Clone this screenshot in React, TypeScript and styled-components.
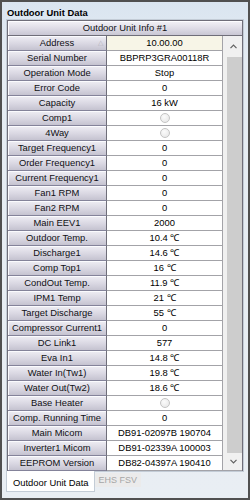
import React from 'react';
import styled, {createGlobalStyle} from 'styled-components';

const GlobalStyle = createGlobalStyle`
    html, body {
        margin: 0;
        padding: 0;
        background: #ffffff;
    }
    body {
        font-family: "Liberation Sans", Arial, sans-serif;
    }
`;

const Frame = styled.div`
    width: 250px;
    height: 500px;
    box-sizing: border-box;
    border: 2px solid #505050;
    background: linear-gradient(#dae5f0, #e5ecf3 60px, #e9eef3);
    display: flex;
    flex-direction: column;
    font-family: "Liberation Sans", Arial, sans-serif;
    font-size: 9.4px;
    color: #101014;
`;

const Title = styled.div`
    height: 17px;
    box-sizing: border-box;
    padding: 5px 0 0 5px;
    line-height: 12px;
    font-weight: bold;
    color: #000;
`;

const TabPage = styled.div`
    margin: 0 4px;
    border: 1px solid #c3ccd6;
    background: #f3f6f9;
`;

const Grid = styled.div`
    border: 1px solid #6f6e79;
    border-bottom: none;
    background: #fff;
`;

const Header = styled.div`
    height: 15px;
    box-sizing: border-box;
    border-bottom: 1px solid #6f6e79;
    line-height: 14px;
    text-align: center;
    background: linear-gradient(#f3f2f7, #dddbe5 55%, #c9c7d4);
    box-shadow: inset 1px 1px 0 #fdfdff;
`;

const Body = styled.div`
    display: flex;
`;

const Table = styled.div`
    display: flex;
    flex-direction: column;
`;

const Row = styled.div`
    display: grid;
    grid-template-columns: 99px 116px;
    height: 15px;
`;

const NameCell = styled.div`
    position: relative;
    box-sizing: border-box;
    border-right: 1px solid #6f6e79;
    border-bottom: 1px solid #84839a;
    line-height: 14px;
    text-align: center;
    white-space: nowrap;
    background: linear-gradient(#efeef4, #d9d7e2 55%, #c5c3d0);
    box-shadow: inset 1px 1px 0 #fbfbfe;
`;

const SortMark = styled.span`
    position: absolute;
    right: 3px;
    top: 0;
    font-size: 7px;
    color: #b4b4bc;
`;

const ValueCell = styled.div<{ $selected?: boolean }>`
    box-sizing: border-box;
    border-right: 1px solid #a3a3a8;
    border-bottom: 1px solid #a3a3a8;
    line-height: 14px;
    text-align: center;
    white-space: nowrap;
    color: #000;
    background: ${(p) => (p.$selected ? '#f7f5e7' : '#ffffff')};
`;

const Radio = styled.span`
    display: inline-block;
    width: 10px;
    height: 10px;
    margin-top: 2px;
    box-sizing: border-box;
    border-radius: 50%;
    border: 1px solid #c4c4c4;
    background: radial-gradient(circle at 40% 35%, #fbfbfb, #e4e4e4);
    vertical-align: top;
`;

const ScrollBar = styled.div`
    width: 19px;
    height: 435px;
    box-sizing: border-box;
    border-bottom: 1px solid #a3a3a8;
    background: #f0f0f0;
    display: flex;
    flex-direction: column;
`;

const Arrow = styled.div<{ $h: number }>`
    height: ${(p) => p.$h}px;
    display: flex;
    align-items: center;
    justify-content: center;
    padding-left: 2px;
`;

const Thumb = styled.div`
    flex: 1;
    margin: 0 0 0 4px;
    background: #cdcdcd;
`;

const TabStrip = styled.div`
    flex: 1;
    display: flex;
    align-items: flex-start;
    padding-left: 4px;
`;

const Tab = styled.div<{ $active?: boolean }>`
    box-sizing: border-box;
    white-space: nowrap;
    ${(p) =>
        p.$active
            ? `
        margin-top: -1px;
        height: 21px;
        padding: 7px 5px 0 6px;
        line-height: 10px;
        background: #ffffff;
        border: 1px solid #c3ccd6;
        border-top: none;
        color: #000;
    `
            : `
        margin-top: 1px;
        height: 14px;
        padding: 2px 4px 0 4px;
        line-height: 10px;
        background: #ebebeb;
        color: #a6a6a6;
        font-size: 9px;
    `}
`;

type Item = {
    name: string;
    value?: string;
    radio?: boolean;
    selected?: boolean;
    sorted?: boolean;
};

const items: Item[] = [
    {name: 'Address', value: '10.00.00', selected: true, sorted: true},
    {name: 'Serial Number', value: 'BBPRP3GRA00118R'},
    {name: 'Operation Mode', value: 'Stop'},
    {name: 'Error Code', value: '0'},
    {name: 'Capacity', value: '16 kW'},
    {name: 'Comp1', radio: true},
    {name: '4Way', radio: true},
    {name: 'Target Frequency1', value: '0'},
    {name: 'Order Frequency1', value: '0'},
    {name: 'Current Frequency1', value: '0'},
    {name: 'Fan1 RPM', value: '0'},
    {name: 'Fan2 RPM', value: '0'},
    {name: 'Main EEV1', value: '2000'},
    {name: 'Outdoor Temp.', value: '10.4 ℃'},
    {name: 'Discharge1', value: '14.6 ℃'},
    {name: 'Comp Top1', value: '16 ℃'},
    {name: 'CondOut Temp.', value: '11.9 ℃'},
    {name: 'IPM1 Temp', value: '21 ℃'},
    {name: 'Target Discharge', value: '55 ℃'},
    {name: 'Compressor Current1', value: '0'},
    {name: 'DC Link1', value: '577'},
    {name: 'Eva In1', value: '14.8 ℃'},
    {name: 'Water In(Tw1)', value: '19.8 ℃'},
    {name: 'Water Out(Tw2)', value: '18.6 ℃'},
    {name: 'Base Heater', radio: true},
    {name: 'Comp. Running Time', value: '0'},
    {name: 'Main Micom', value: 'DB91-02097B 190704'},
    {name: 'Inverter1 Micom', value: 'DB91-02339A 100003'},
    {name: 'EEPROM Version', value: 'DB82-04397A 190410'},
];

const Chevron = ({up}: { up?: boolean }) => (
    <svg width="7" height="5" viewBox="0 0 7 5">
        <path
            d={up ? 'M0.5 4.2 L3.5 1.2 L6.5 4.2' : 'M0.5 0.8 L3.5 3.8 L6.5 0.8'}
            fill="none"
            stroke="#606060"
            strokeWidth="1.2"
        />
    </svg>
);

const App = () => {
    return (
        <Frame>
            <GlobalStyle/>
            <Title>Outdoor Unit Data</Title>
            <TabPage>
                <Grid>
                    <Header>Outdoor Unit Info #1</Header>
                    <Body>
                        <Table>
                            {items.map((item, index) => (
                                <Row key={index}>
                                    <NameCell>
                                        {item.name}
                                        {item.sorted && <SortMark>△</SortMark>}
                                    </NameCell>
                                    <ValueCell $selected={item.selected}>
                                        {item.radio ? <Radio/> : item.value}
                                    </ValueCell>
                                </Row>
                            ))}
                        </Table>
                        <ScrollBar>
                            <Arrow $h={21}>
                                <Chevron up/>
                            </Arrow>
                            <Thumb/>
                            <Arrow $h={17}>
                                <Chevron/>
                            </Arrow>
                        </ScrollBar>
                    </Body>
                </Grid>
            </TabPage>
            <TabStrip>
                <Tab $active>Outdoor Unit Data</Tab>
                <Tab>EHS FSV</Tab>
            </TabStrip>
        </Frame>
    );
};

export default App;
